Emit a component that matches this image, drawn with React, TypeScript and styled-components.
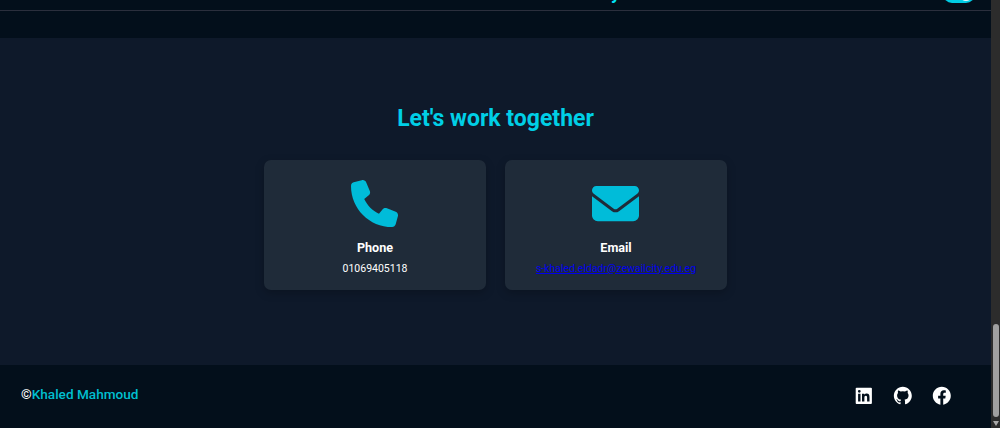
import styled, { createGlobalStyle } from 'styled-components'
import { BiLogoFacebookCircle, BiLogoGithub, BiLogoLinkedinSquare } from 'react-icons/bi'
import { FaEnvelope, FaPhone } from 'react-icons/fa6'

const GlobalStyle = createGlobalStyle`
	* {
		box-sizing: border-box;
	}
	body {
		margin: 0;
		background: #030f1b;
		color: #fff;
		font-family: Roboto, sans-serif;
		overflow: hidden;
	}
	h2, h3, p {
		margin: 0;
	}
`
const Page = styled.div`
	display: grid;
	grid-template-columns: 991px 9px;
	height: 428px;
`
const Content = styled.div`
	display: flex;
	flex-direction: column;
`
const Services = styled.div`
	display: flex;
	align-items: flex-end;
	justify-content: space-between;
	height: 11px;
	padding: 0 16px 7px 611px;
	border-bottom: 1px solid #2b2f3d;
	overflow: hidden;
`
const ServiceName = styled.h3`
	color: #00e1f5;
	font-size: 18px;
	line-height: 22px;
	margin-bottom: -1px;
`
const Toggle = styled.div`
	display: flex;
	align-items: center;
	justify-content: flex-end;
	width: 32px;
	height: 18px;
	padding: 2px;
	border-radius: 9px;
	background: #00cce4;
`
const Knob = styled.span`
	width: 14px;
	height: 14px;
	border-radius: 50%;
	background: #e8faff;
`
const Contact = styled.section`
	display: flex;
	flex-direction: column;
	align-items: center;
	height: 327px;
	margin-top: 27px;
	padding-top: 67px;
	background: #0e192a;
`
const Title = styled.h2`
	color: #00cfe6;
	font-size: 23px;
	font-weight: 700;
	line-height: 28px;
`
const Cards = styled.div`
	display: flex;
	gap: 19px;
	margin-top: 27px;
`
const Card = styled.div`
	display: flex;
	flex-direction: column;
	align-items: center;
	width: 222px;
	height: 130px;
	padding-top: 20px;
	border-radius: 7px;
	background: #1f2b39;
	box-shadow: 0 3px 10px rgba(0, 0, 0, 0.22);

	svg {
		width: 47px;
		height: 47px;
		margin-right: 1px;
		color: #00bcd9;
	}
`
const CardName = styled.h3`
	margin-top: 13px;
	font-size: 12.6px;
	font-weight: 700;
	line-height: 16px;
`
const CardText = styled.p`
	margin-top: 6px;
	font-size: 10.5px;
	line-height: 13px;
`
const MailLink = styled.a`
	color: #0000ee;
	text-decoration: underline;
`
const Footer = styled.footer`
	display: flex;
	align-items: center;
	justify-content: space-between;
	flex: 1;
	padding: 0 38px 0 21px;
`
const Copyright = styled.p`
	font-size: 13.6px;
	font-weight: 500;
	line-height: 18px;
	padding-bottom: 6px;

	span {
		color: #00bfcf;
	}
`
const Socials = styled.div`
	display: flex;
	gap: 17.4px;
	padding-bottom: 1px;

	svg {
		display: block;
		width: 21.6px;
		height: 21.6px;
	}
`
const Scrollbar = styled.div`
	display: flex;
	flex-direction: column;
	align-items: center;
	justify-content: flex-end;
	padding: 0 0 2px 1px;
	background: #2c2c2c;
`
const Thumb = styled.div`
	width: 6px;
	height: 93px;
	margin-bottom: 4px;
	border-radius: 3px;
	background: #a0a0a0;
`
const Arrow = styled.div`
	border: 3px solid transparent;
	border-top: 5px solid #a9a9a9;
	border-bottom: 0;
`

export default function App() {
	return (
		<>
			<GlobalStyle />
			<Page>
				<Content>
					<Services>
						<ServiceName>y</ServiceName>
						<Toggle>
							<Knob />
						</Toggle>
					</Services>
					<Contact>
						<Title>Let's work together</Title>
						<Cards>
							<Card>
								<FaPhone />
								<CardName>Phone</CardName>
								<CardText>01069405118</CardText>
							</Card>
							<Card>
								<FaEnvelope />
								<CardName>Email</CardName>
								<CardText>
									<MailLink href='mailto:s-khaled.eldadr@zewailcity.edu.eg'>
										s-khaled.eldadr@zewailcity.edu.eg
									</MailLink>
								</CardText>
							</Card>
						</Cards>
					</Contact>
					<Footer>
						<Copyright>
							©<span>Khaled Mahmoud</span>
						</Copyright>
						<Socials>
							<BiLogoLinkedinSquare />
							<BiLogoGithub />
							<BiLogoFacebookCircle />
						</Socials>
					</Footer>
				</Content>
				<Scrollbar>
					<Thumb />
					<Arrow />
				</Scrollbar>
			</Page>
		</>
	)
}
